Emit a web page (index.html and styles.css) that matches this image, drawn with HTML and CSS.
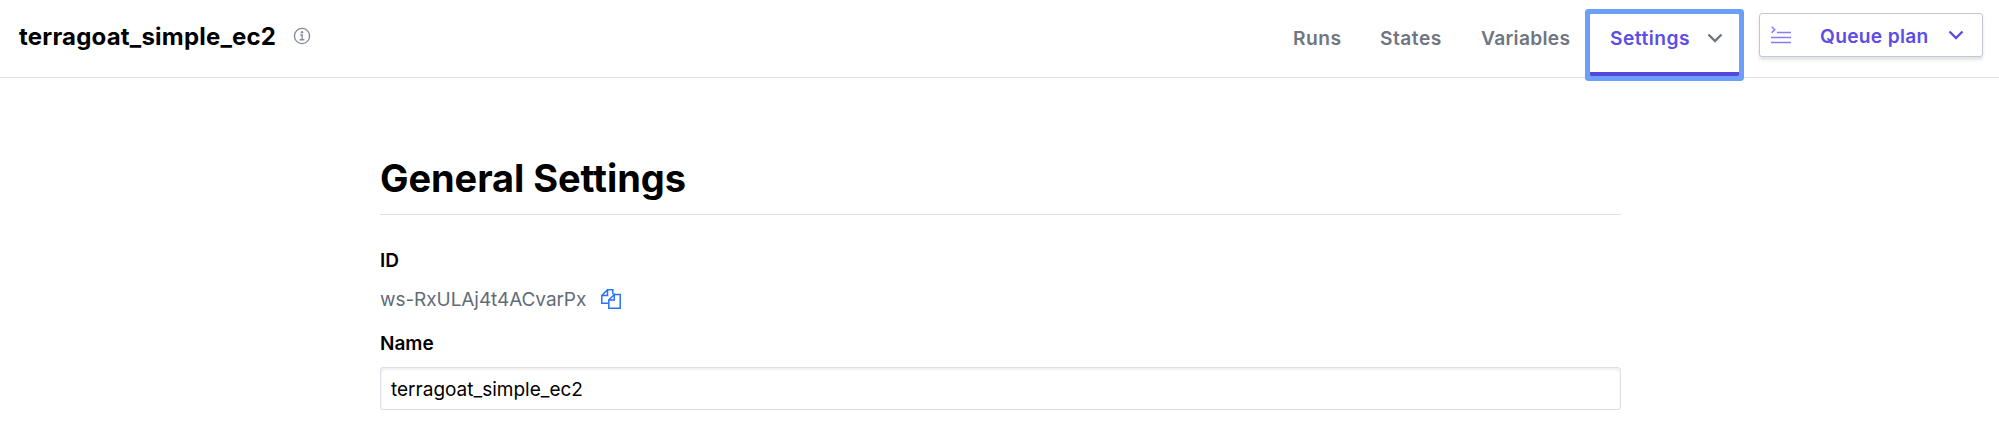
FILE: index.html
```html
<!DOCTYPE html>
<html lang="en">
<head>
<meta charset="utf-8">
<title>General Settings</title>
<link rel="stylesheet" href="styles.css">
</head>
<body>
<header class="header">
  <div class="workspace">
    <span class="workspace-name">terragoat_simple_ec2</span>
    <svg class="info" viewBox="0 0 18 18"><circle cx="9" cy="9" r="7.6"/><path d="M7.200 8h2v4.600M6.600 12.800h4.800"/><circle class="dot" cx="9" cy="5.200" r="1.200"/></svg>
  </div>
  <nav class="nav">
    <a class="tab runs">Runs</a>
    <a class="tab states">States</a>
    <a class="tab variables">Variables</a>
    <a class="tab active"><span class="tab-label">Settings</span><svg class="chevron" viewBox="0 0 16 10"><path d="M1.500 1.500 8 8l6.500-6.500"/></svg></a>
    <button class="queue">
      <svg class="queue-icon" viewBox="0 0 20 18"><path class="prompt" d="M.7.700l3 3-3 3"/><path d="M6 6.500h14M0 11.500h20M0 16.500h20"/></svg>
      <span class="queue-label">Queue plan</span>
      <svg class="chevron" viewBox="0 0 16 10"><path d="M1.500 1.500 8 8l6.500-6.500"/></svg>
    </button>
  </nav>
</header>
<main class="content">
  <h1 class="heading">General Settings</h1>
  <div class="label">ID</div>
  <div class="id-row">
    <span class="id-value">ws-RxULAj4t4ACvarPx</span>
    <svg class="copy" viewBox="0 0 20 20"><path d="M7 14.300H.8V6.500L6.500.8h5.300v4.500M6.500.8v5.700H.8M13.300 5.500h5.900v13.700H7.800v-8.200l5.500-5.500v5.500H7.800"/></svg>
  </div>
  <label class="label" for="name">Name</label>
  <input class="field" id="name" type="text" value="terragoat_simple_ec2">
</main>
</body>
</html>
```

FILE: styles.css
```css
* { box-sizing: border-box; }

body {
  margin: 0;
  background: #fff;
  color: #000;
  font-family: Inter, "Liberation Sans", sans-serif;
}

svg { display: block; fill: none; flex: none; }

.header {
  display: flex;
  justify-content: space-between;
  height: 78px;
  padding-right: 16px;
  border-bottom: 1px solid #dfe1e5;
}

.workspace {
  display: flex;
  align-items: center;
  height: 72px;
  padding-left: 19px;
}

.workspace-name { width: 274px; font-size: 24px; font-weight: 650; letter-spacing: .2px; }

.info { width: 18px; height: 18px; margin-top: -1px; stroke: #858c9b; stroke-width: 1.4; }
.info .dot { fill: #858c9b; stroke: none; }

.nav { display: flex; font-size: 19.2px; font-weight: 600; letter-spacing: .5px; }

.tab { height: 76px; line-height: 77px; color: #6f7682; }
.runs { width: 87px; }
.states { width: 101px; }
.variables { width: 109px; letter-spacing: .3px; }

.active {
  display: flex;
  width: 149px;
  height: 62px;
  margin-top: 14px;
  padding-left: 20px;
  line-height: 49px;
  color: #5c4ee5;
  border-bottom: 4px solid #5549dd;
  border-radius: 1px;
  box-shadow: 0 0 0 5px #6b9ff8;
}

.tab-label { width: 97px; }

.chevron { width: 16px; height: 10px; stroke: #6f7682; stroke-width: 2.4; }
.active .chevron { margin-top: 19px; }

.queue {
  display: flex;
  align-items: center;
  width: 224px;
  height: 44px;
  margin: 13px 0 0 20px;
  padding: 0 0 0 11px;
  background: #fff;
  border: 1px solid #c3c7d2;
  border-radius: 3px;
  box-shadow: 0 3px 3px rgba(80, 85, 100, .16);
  color: #5c4ee5;
  font: inherit;
  letter-spacing: .3px;
  text-align: left;
}

.queue-icon { width: 20px; height: 18px; margin-right: 29px; stroke: #897cf0; stroke-width: 1.6; }
.queue-label { width: 128px; padding-top: 1px; }
.queue .chevron { stroke: #5c4ee5; }

.content { width: 1241px; margin: 76px 0 0 380px; }

.heading {
  height: 61px;
  margin: 0 0 33px;
  border-bottom: 1px solid #dfe1e5;
  font-size: 38px;
  font-weight: 700;
  letter-spacing: -.07px;
  line-height: 48px;
}

.label { display: block; height: 26px; font-size: 19px; font-weight: 600; line-height: 26px; }

.id-row { display: flex; align-items: center; height: 40px; margin: 5px 0 12px; }
.id-value { width: 221px; font-size: 19px; letter-spacing: -.07px; color: #646b78; }
.copy { width: 20px; height: 20px; stroke: #2b72f5; stroke-width: 1.5; }

.field {
  display: block;
  width: 1241px;
  height: 43px;
  margin: 10px 0 0;
  padding: 2px 10px 0;
  border: 1px solid #dcdfe5;
  border-radius: 3px;
  box-shadow: inset 0 2px 3px rgba(80, 85, 100, .1);
  color: #000;
  font: 19px Inter, "Liberation Sans", sans-serif;
}
```
